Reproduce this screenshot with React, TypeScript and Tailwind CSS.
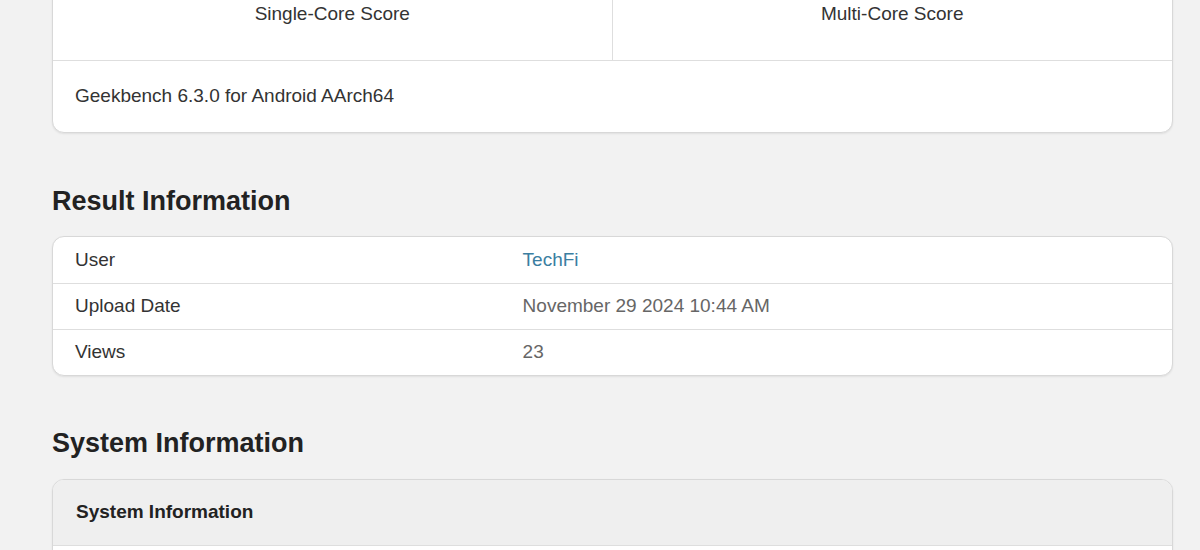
import React from 'react';

const font = { fontFamily: '"Liberation Sans", Arial, sans-serif' };

const resultRows = [
  { label: 'User', value: 'TechFi', link: true },
  { label: 'Upload Date', value: 'November 29 2024 10:44 AM' },
  { label: 'Views', value: '23' },
];

export default function App() {
  return (
    <div className="min-h-[550px] w-[1200px] overflow-hidden bg-[#f2f2f2] text-[#333]" style={font}>
      <div className="ml-[52px] w-[1121px]">
        {/* score card, top is scrolled off */}
        <div className="-mt-[21px] rounded-xl border border-[#d8d8d8] bg-white shadow-[0_1px_2px_rgba(0,0,0,0.08)]">
          <div className="grid grid-cols-2 border-b border-[#dedede]">
            <div className="flex h-[80px] flex-col items-center justify-end border-r border-[#dedede] pb-[35px] text-[19px] leading-[22px]">
              Single-Core Score
            </div>
            <div className="flex h-[80px] flex-col items-center justify-end pb-[35px] text-[19px] leading-[22px]">
              Multi-Core Score
            </div>
          </div>
          <div className="flex h-[71px] items-center px-[22px] text-[19px]">
            Geekbench 6.3.0 for Android AArch64
          </div>
        </div>

        <h2 className="mt-[52px] mb-[19px] text-[27px] font-bold leading-[32px] text-[#222]">Result Information</h2>
        <div className="overflow-hidden rounded-xl border border-[#d8d8d8] bg-white shadow-[0_1px_2px_rgba(0,0,0,0.08)]">
          {resultRows.map((r, i) => (
            <div key={r.label} className={`flex h-[46px] items-center text-[19px] ${i > 0 ? 'border-t border-[#dedede]' : ''}`}>
              <div className="w-[40%] pl-[22px]">{r.label}</div>
              <div className={`pl-[22px] ${r.link ? 'text-[#3b7ea1]' : 'text-[#666]'}`}>{r.value}</div>
            </div>
          ))}
        </div>

        <h2 className="mt-[51px] mb-[20px] text-[27px] font-bold leading-[32px] text-[#222]">System Information</h2>
        <div className="overflow-hidden rounded-xl border border-[#d8d8d8] bg-white shadow-[0_1px_2px_rgba(0,0,0,0.08)]">
          <div className="flex h-[65px] items-center bg-[#efefef] px-[23px] text-[19px] font-bold text-[#222]">
            System Information
          </div>
          <div className="h-[45px] border-t border-[#dedede]" />
        </div>
      </div>
    </div>
  );
}
